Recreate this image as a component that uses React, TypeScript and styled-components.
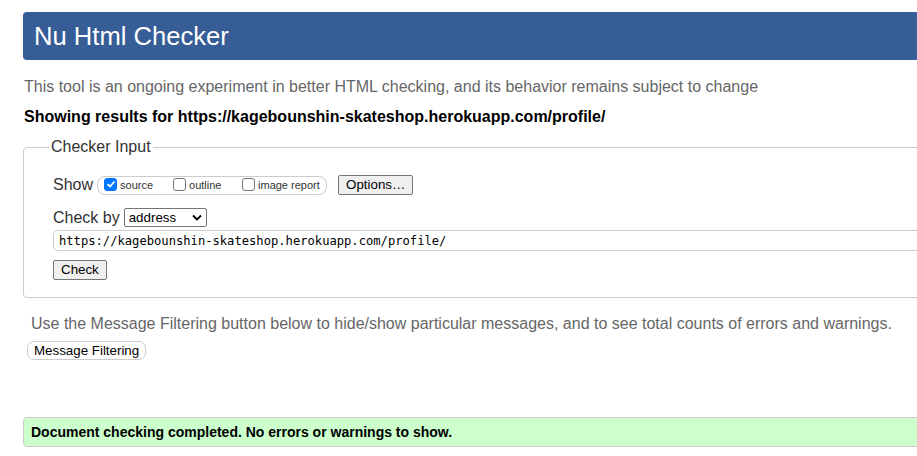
import React from "react";
import styled, { createGlobalStyle } from "styled-components";

const Global = createGlobalStyle`
  html, body { margin: 0; padding: 0; overflow: hidden; background: #fff; }
  body { font-family: "Liberation Sans", Arial, sans-serif; color: #000; }
`;

const Page = styled.div`
  width: 1000px;
  padding: 12px 0 0 23px;
  box-sizing: border-box;
`;

const Header = styled.h1`
  margin: 0;
  height: 48px;
  background: #365d95;
  border-radius: 4px;
  color: #fff;
  font-size: 25.6px;
  font-weight: normal;
  line-height: 48px;
  padding-left: 11px;
`;

const Intro = styled.p`
  margin: 17px 0 0 1px;
  color: #666;
  font-size: 16px;
  line-height: 20px;
`;

const Results = styled.p`
  margin: 10px 0 0 1px;
  font-size: 16px;
  font-weight: bold;
  line-height: 20px;
`;

const Fieldset = styled.fieldset`
  margin: 11px 0 0 0;
  border: 1px solid #ccc;
  border-radius: 4px;
  padding: 19px 29px 17px 29px;
  min-width: 0;
`;

const Legend = styled.legend`
  margin-left: -4px;
  padding: 0 2px;
  font-size: 16px;
  color: #333;
`;

const Row = styled.div<{ gap?: number; top?: number }>`
  display: flex;
  align-items: center;
  gap: ${(p) => p.gap ?? 4}px;
  margin-top: ${(p) => p.top ?? 0}px;
`;

const Label = styled.span`
  font-size: 16px;
  color: #333;
`;

const Pill = styled.div`
  display: flex;
  align-items: center;
  border: 1px solid #ccc;
  border-radius: 8px;
  height: 17px;
  padding: 0 4px 0 6px;
`;

const Opt = styled.label<{ w: number }>`
  display: flex;
  align-items: center;
  width: ${(p) => p.w}px;
  font-size: 11px;
  color: #333;
  gap: 3px;
`;

const Box = styled.span<{ on?: boolean }>`
  width: 13px;
  height: 13px;
  box-sizing: border-box;
  border-radius: 3px;
  margin-top: -2px;
  border: 1px solid ${(p) => (p.on ? "#0075ff" : "#767676")};
  background: ${(p) => (p.on ? "#0075ff" : "#fff")};
  display: inline-flex;
  align-items: center;
  justify-content: center;
`;

const Btn = styled.button<{ round?: boolean }>`
  font-family: "Liberation Sans", Arial, sans-serif;
  font-size: 13.33px;
  color: #000;
  background: ${(p) => (p.round ? "#fff" : "#efefef")};
  border: 1px solid ${(p) => (p.round ? "#ccc" : "#767676")};
  border-radius: ${(p) => (p.round ? "7px" : "2px")};
  padding: ${(p) => (p.round ? "1px 6px" : "1px 7px")};
  height: ${(p) => (p.round ? "19px" : "20px")};
  line-height: 16px;
`;

const Select = styled.div`
  display: inline-flex;
  align-items: center;
  justify-content: space-between;
  width: 83px;
  height: 19px;
  box-sizing: border-box;
  border: 1px solid #767676;
  border-radius: 2px;
  padding: 0 4px 0 4px;
  font-size: 13.33px;
  background: #fff;
`;

const UrlInput = styled.div`
  margin-top: 3px;
  height: 21px;
  box-sizing: border-box;
  border: 1px solid #ccc;
  border-radius: 5px;
  margin-right: -60px;
  padding: 0 5px;
  font-family: "DejaVu Sans Mono", monospace;
  font-size: 12.15px;
  line-height: 20px;
  color: #000;
`;

const Note = styled.p`
  margin: 16px 0 0 8px;
  color: #666;
  font-size: 16px;
  line-height: 20px;
`;

const FilterWrap = styled.div`
  margin: 7px 0 0 4px;
`;

const Success = styled.div`
  margin-top: 57px;
  height: 30px;
  box-sizing: border-box;
  background: #ccffcc;
  border: 1px solid #ccc;
  border-radius: 4px;
  padding-left: 7px;
  font-size: 14px;
  font-weight: bold;
  line-height: 28px;
`;

const Tick = () => (
  <svg width="10" height="10" viewBox="0 0 10 10">
    <path d="M1.5 5.2 L4 7.5 L8.5 2.5" stroke="#fff" strokeWidth="1.8" fill="none" />
  </svg>
);

export default function App() {
  return (
    <Page>
      <Global />
      <Header>Nu Html Checker</Header>
      <Intro>This tool is an ongoing experiment in better HTML checking, and its behavior remains subject to change</Intro>
      <Results>Showing results for https://kagebounshin-skateshop.herokuapp.com/profile/</Results>
      <Fieldset>
        <Legend>Checker Input</Legend>
        <Row gap={11}>
          <Row gap={4}>
            <Label>Show</Label>
            <Pill>
              <Opt w={69}><Box on><Tick /></Box>source</Opt>
              <Opt w={69}><Box />outline</Opt>
              <Opt w={80}><Box />image report</Opt>
            </Pill>
          </Row>
          <Btn>Options…</Btn>
        </Row>
        <Row gap={4} top={13}>
          <Label>Check by</Label>
          <Select>
            address
            <svg width="10" height="7" viewBox="0 0 10 7">
              <path d="M1 1.5 L5 5.5 L9 1.5" stroke="#000" strokeWidth="1.8" fill="none" />
            </svg>
          </Select>
        </Row>
        <UrlInput>https://kagebounshin-skateshop.herokuapp.com/profile/</UrlInput>
        <Row top={9}>
          <Btn>Check</Btn>
        </Row>
      </Fieldset>
      <Note>Use the Message Filtering button below to hide/show particular messages, and to see total counts of errors and warnings.</Note>
      <FilterWrap>
        <Btn round>Message Filtering</Btn>
      </FilterWrap>
      <Success>Document checking completed. No errors or warnings to show.</Success>
    </Page>
  );
}
